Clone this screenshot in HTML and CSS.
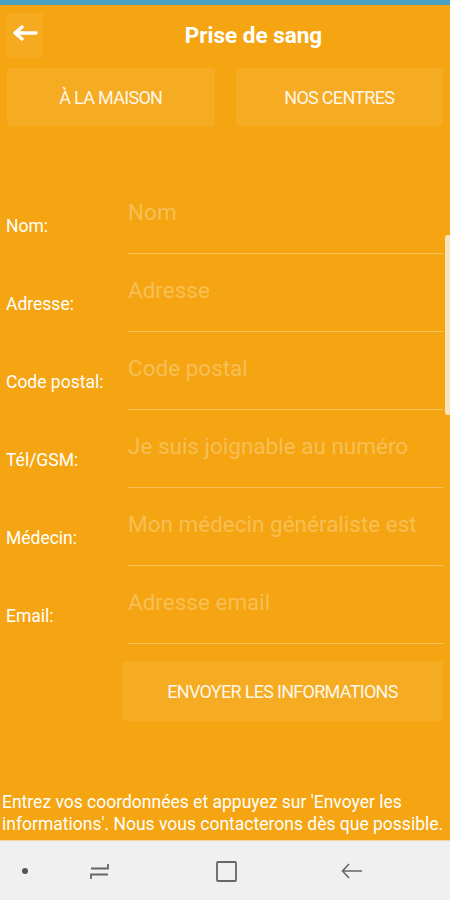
FILE: index.html
```html
<!DOCTYPE html>
<html lang="fr">
<head>
    <meta charset="UTF-8">
    <meta name="viewport" content="width=device-width, initial-scale=1.0">
    <title>Prise de sang</title>
    <link rel="stylesheet" href="styles.css">
</head>
<body>
    <div class="statusbar"></div>

    <main class="screen">
        <header class="topbar">
            <button class="back" type="button">
                <svg width="26" height="16" viewBox="0 0 26 16">
                    <path d="M24 8 H4 M10 2 L3 8 L10 14" fill="none" stroke="#fff" stroke-width="3.4" stroke-linecap="round" stroke-linejoin="round"/>
                </svg>
            </button>
            <h1>Prise de sang</h1>
        </header>

        <nav class="tabs">
            <button type="button" class="tab">À LA MAISON</button>
            <button type="button" class="tab">NOS CENTRES</button>
        </nav>

        <form class="form" id="bloodForm">
            <label for="nom">Nom:</label>
            <input type="text" id="nom" placeholder="Nom">

            <label for="adresse">Adresse:</label>
            <input type="text" id="adresse" placeholder="Adresse">

            <label for="cp">Code postal:</label>
            <input type="text" id="cp" placeholder="Code postal">

            <label for="tel">Tél/GSM:</label>
            <input type="tel" id="tel" placeholder="Je suis joignable au numéro">

            <label for="medecin">Médecin:</label>
            <input type="text" id="medecin" placeholder="Mon médecin généraliste est">

            <label for="email">Email:</label>
            <input type="email" id="email" placeholder="Adresse email">
        </form>

        <button type="button" class="submit">ENVOYER LES INFORMATIONS</button>

        <p class="info">Entrez vos coordonnées et appuyez sur 'Envoyer les informations'. Nous vous contacterons dès que possible.</p>

        <div class="scrollbar"></div>
    </main>

    <footer class="navbar">
        <span class="nav-item"><span class="dot"></span></span>
        <span class="nav-item">
            <svg width="24" height="24" viewBox="0 0 24 24">
                <path d="M3 9.5 H20 V5 M20 15.5 H3 V20" fill="none" stroke="#666" stroke-width="1.8"/>
            </svg>
        </span>
        <span class="nav-item">
            <svg width="24" height="24" viewBox="0 0 24 24">
                <rect x="3" y="3" width="19" height="19" rx="1" fill="none" stroke="#666" stroke-width="1.8"/>
            </svg>
        </span>
        <span class="nav-item">
            <svg width="24" height="24" viewBox="0 0 24 24">
                <path d="M22 12 H3 M9 5 L2.5 12 L9 19" fill="none" stroke="#666" stroke-width="1.6"/>
            </svg>
        </span>
    </footer>
</body>
</html>
```

FILE: styles.css
```css
body {
    margin: 0;
    padding: 0;
    font-family: Roboto, "Noto Sans", sans-serif;
    background-color: #f5a511;
    width: 450px;
    height: 900px;
    overflow: hidden;
}

.statusbar {
    height: 5px;
    background-color: #4aa1c4;
}

.screen {
    position: relative;
    height: 835px;
    display: flex;
    flex-direction: column;
    background-color: #f5a511;
}

.topbar {
    display: flex;
    align-items: center;
    height: 60px;
}

.back {
    width: 36px;
    height: 45px;
    margin: 0 14px 0 7px;
    padding: 0 0 4px;
    border: none;
    border-radius: 2px;
    background-color: rgba(255, 255, 255, 0.06);
    display: flex;
    align-items: center;
    justify-content: center;
}

.topbar h1 {
    flex: 1;
    margin: 0;
    text-align: center;
    color: white;
    font-size: 22.5px;
    font-weight: bold;
}

.tabs {
    display: grid;
    grid-template-columns: 1fr 1fr;
    gap: 21px;
    padding: 0 7px;
    margin-top: 3px;
}

.tab,
.submit {
    height: 58px;
    border: none;
    border-radius: 4px;
    background-color: rgba(255, 255, 255, 0.08);
    color: rgba(255, 255, 255, 0.92);
    font-family: Roboto, sans-serif;
    font-size: 18px;
    letter-spacing: -0.7px;
}

.form {
    display: grid;
    grid-template-columns: 128px 1fr;
    margin-top: 50px;
}

.form label {
    padding: 40px 0 0 6px;
    height: 38px;
    line-height: 20px;
    color: white;
    font-size: 17.5px;
}

.form input {
    box-sizing: border-box;
    height: 78px;
    margin-right: 7px;
    padding: 22px 0 27px;
    border: none;
    border-bottom: 1px solid rgba(255, 255, 255, 0.3);
    background: transparent;
    outline: none;
    font-family: Roboto, sans-serif;
    font-size: 22.5px;
    line-height: 28px;
    color: white;
}

.form input::placeholder {
    color: rgba(255, 255, 255, 0.3);
}

.submit {
    height: 60px;
    margin: 17px 7px 0 122px;
}

.info {
    margin: 70px 0 0 2px;
    color: white;
    font-size: 17.5px;
    line-height: 22px;
}

.scrollbar {
    position: absolute;
    top: 230px;
    right: 0;
    width: 5px;
    height: 180px;
    border-radius: 3px 0 0 3px;
    background-color: #f9e3bd;
}

.navbar {
    display: grid;
    grid-template-columns: 50px 100px 152px 100px;
    align-items: center;
    justify-items: center;
    height: 60px;
    background-color: #f0f0f0;
    border-top: 1px solid #f4d79e;
    box-sizing: border-box;
}

.nav-item {
    display: flex;
}

.dot {
    width: 6px;
    height: 6px;
    border-radius: 50%;
    background-color: #555;
}
```
